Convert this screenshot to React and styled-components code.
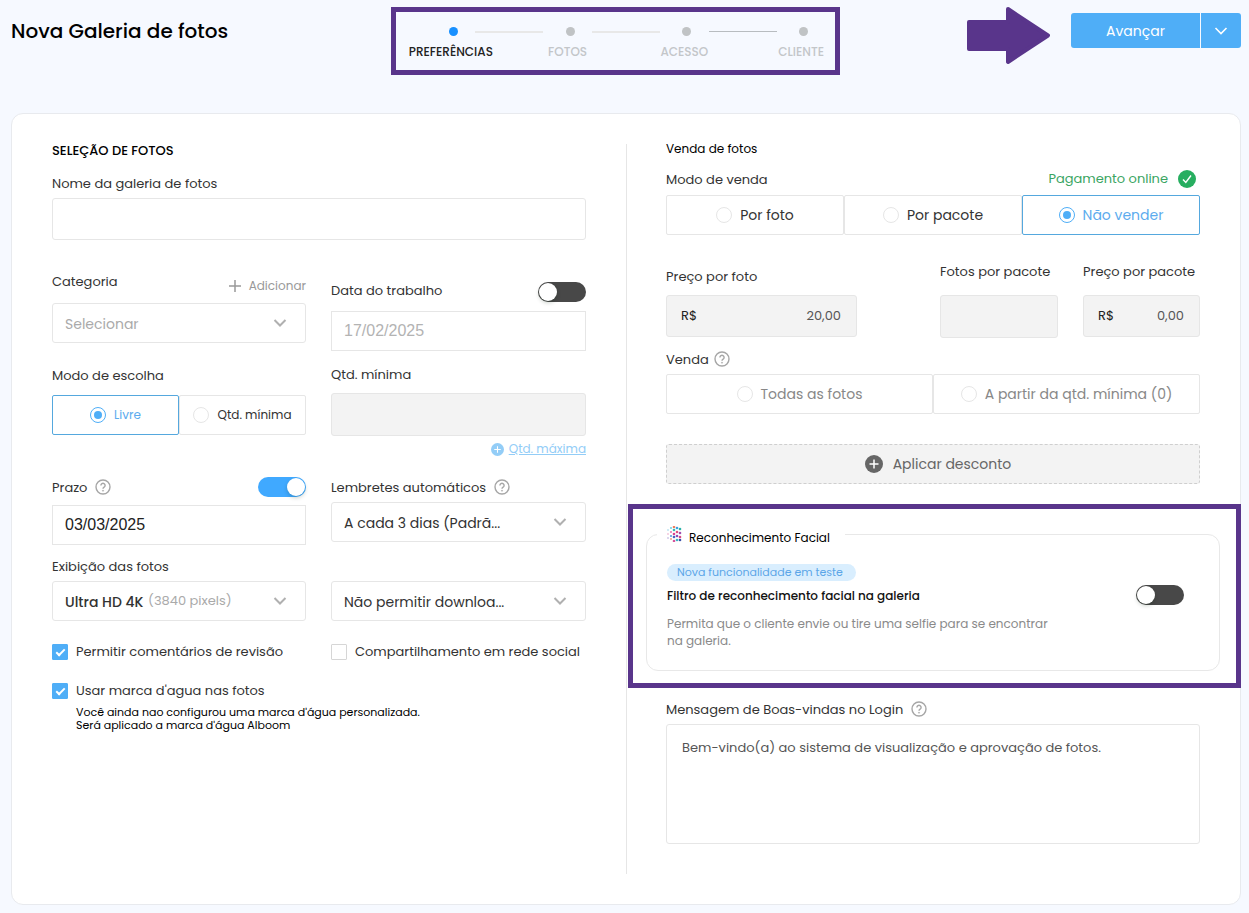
import React from 'react';
import styled, { createGlobalStyle, css } from 'styled-components';

const line = '#e6e6e6';
const blue = '#4faef7';
const purple = '#59358b';

const GlobalStyle = createGlobalStyle`
  *, *::before, *::after { box-sizing: border-box; }
  body {
    margin: 0;
    background: #f6f9ff;
    color: #333;
    font-family: Poppins, Inter, "Open Sans", sans-serif;
    font-size: 13px;
    line-height: 18px;
  }
  button, input, select, textarea { font: inherit; color: inherit; }
  h1, h2, p, ol { margin: 0; padding: 0; }
`;

const Page = styled.div`
  padding: 7px 8px 8px 11px;
`;

const Header = styled.header`
  display: grid;
  grid-template-columns: minmax(0, 19fr) 449px minmax(0, 20fr);
  align-items: start;
  margin-bottom: 38px;
`;

const Title = styled.h1`
  padding-top: 10px;
  color: #000;
  font-size: 20px;
  font-weight: 500;
  line-height: 28px;
`;

const Stepper = styled.nav`
  height: 68px;
  padding-top: 15px;
  border: 5px solid ${purple};
`;

const Steps = styled.ol`
  display: flex;
  list-style: none;
  margin: 0 -24px 0 -4px;
`;

const Step = styled.li`
  flex: 1;
  color: ${(p) => (p.$active ? '#222' : '#c3c6c9')};
  font-size: 12px;
  font-weight: 500;
  line-height: 16px;
  text-align: center;
`;

const Track = styled.div`
  display: flex;
  align-items: center;
  justify-content: space-between;
  height: 9px;
  margin-bottom: 8px;
`;

const HalfLine = styled.span`
  width: 34px;
  height: ${(p) => (p.$thin ? 1 : 2)}px;
  background: ${(p) => (p.$hidden ? 'transparent' : p.$thin ? '#b8bcc0' : '#e8e8e8')};
`;

const Dot = styled.span`
  width: 9px;
  height: 9px;
  margin-left: 5px;
  border-radius: 50%;
  background: ${(p) => (p.$active ? '#1890ff' : '#c0c3c5')};
`;

const Actions = styled.div`
  display: flex;
  justify-content: flex-end;
  gap: 20px;
`;

const SplitButton = styled.div`
  display: flex;
  gap: 1px;
  margin-top: 6px;
`;

const PrimaryButton = styled.button`
  display: grid;
  place-items: center;
  width: ${(p) => (p.$icon ? 40 : 129)}px;
  height: 35px;
  padding: 0;
  border: 0;
  border-radius: ${(p) => (p.$icon ? '0 3px 3px 0' : '3px 0 0 3px')};
  background: ${blue};
  color: #fff;
  font-size: 14px;
`;

const Card = styled.main`
  display: grid;
  grid-template-columns: minmax(0, 1fr) minmax(0, 1fr);
  padding: 30px 40px;
  border: 1px solid #e8eaee;
  border-radius: 12px;
  background: #fff;
`;

const LeftPanel = styled.section`
  padding-right: 40px;
`;

const RightPanel = styled.section`
  padding: 0 0 30px 39px;
  border-left: 1px solid ${line};
`;

const PanelTitle = styled.h2`
  color: #000;
  font-size: ${(p) => (p.$plain ? 12 : 13)}px;
  font-weight: ${(p) => (p.$plain ? 400 : 500)};
  line-height: ${(p) => (p.$plain ? 10 : 14)}px;
`;

const Columns = styled.div`
  display: grid;
  grid-template-columns: minmax(0, 254fr) minmax(0, 255fr);
  column-gap: 25px;
`;

const Field = styled.div`
  display: flex;
  flex-direction: column;
  gap: ${(p) => p.$gap ?? 10}px;
  margin-top: ${(p) => p.$top ?? 24}px;
`;

const LabelRow = styled.div`
  display: flex;
  align-items: ${(p) => (p.$start ? 'flex-start' : 'flex-end')};
  gap: ${(p) => (p.$tight ? 5 : 8)}px;
  min-height: ${(p) => p.$height ?? 18}px;
`;

const LinkButton = styled.button`
  display: flex;
  align-items: center;
  gap: 8px;
  height: 26px;
  margin-left: auto;
  padding: 0;
  border: 0;
  background: none;
  color: #999;
  font-size: 12px;
`;

const box = css`
  width: 100%;
  border: 1px solid ${line};
  border-radius: 3px;
  background: #fff;
  outline: none;
`;

const TextInput = styled.input`
  ${box}
  height: 42px;
  padding: 0 12px;
  &:disabled { height: 43px; background: #f3f3f3; }
`;

const DateInput = styled.input`
  ${box}
  height: 40px;
  padding: 0 12px;
  border-radius: 0;
  color: #222;
  font-family: "Liberation Sans", Arial, sans-serif;
  font-size: 16px;
  &::placeholder { color: #b3b3b3; opacity: 1; }
`;

const SelectBox = styled.div`
  ${box}
  display: flex;
  align-items: center;
  gap: 4px;
  height: 40px;
  padding: 0 18px 0 12px;
  color: #aaa;
  svg { margin-left: auto; flex: none; }
`;

const Select = styled.select`
  appearance: none;
  flex: ${(p) => (p.$fit ? 'none' : '1')};
  min-width: 0;
  height: 38px;
  padding: 2px 0 0;
  border: 0;
  outline: none;
  background: transparent;
  color: ${(p) => (p.$muted ? '#aaa' : '#333')};
  font-size: 14px;
  font-weight: ${(p) => (p.$fit ? 500 : 400)};
`;

const Segments = styled.div`
  display: flex;
`;

const Segment = styled.label`
  flex: 1;
  display: flex;
  align-items: center;
  justify-content: center;
  gap: 8px;
  height: 40px;
  border: 1px solid ${(p) => (p.$active ? '#55a8de' : line)};
  border-radius: 2px;
  color: ${(p) => (p.$active ? '#5cabee' : p.$muted ? '#888' : '#333')};
  font-size: ${(p) => (p.$small ? 12 : 14)}px;
  white-space: nowrap;
`;

const Radio = styled.input`
  appearance: none;
  display: grid;
  place-items: center;
  width: 16px;
  height: 16px;
  margin: 0;
  border: 1px solid #e6e6e6;
  border-radius: 50%;
  &:checked { border-color: ${blue}; }
  &:checked::before {
    content: '';
    width: 8px;
    height: 8px;
    border-radius: 50%;
    background: ${blue};
  }
`;

const Switch = styled.input`
  appearance: none;
  flex: none;
  display: flex;
  align-items: center;
  width: 48px;
  height: 20px;
  margin: 0 0 0 auto;
  padding: 0 1px;
  border-radius: 10px;
  background: #484848;
  &::before {
    content: '';
    width: 18px;
    height: 18px;
    border-radius: 50%;
    background: #fff;
    box-shadow: 0 2px 4px rgba(0, 35, 11, 0.2);
  }
  &:checked { background: #40a9ff; justify-content: flex-end; }
`;

const MaxLink = styled.a`
  display: flex;
  align-items: center;
  align-self: flex-end;
  gap: 5px;
  margin-top: 4px;
  color: #93cdf7;
  font-size: 12px;
  text-decoration: none;
  span { text-decoration: underline; }
`;

const Checks = styled.div`
  display: grid;
  grid-template-columns: minmax(0, 254fr) minmax(0, 255fr);
  column-gap: 25px;
  row-gap: 21px;
  margin-top: 22px;
`;

const CheckLabel = styled.label`
  display: flex;
  align-items: center;
  gap: 8px;
  white-space: nowrap;
`;

const Checkbox = styled.input`
  appearance: none;
  display: grid;
  place-items: center;
  flex: none;
  width: 16px;
  height: 16px;
  margin: 0;
  border: 1px solid #d6d6d6;
  border-radius: 1px;
  background: #fff;
  &:checked { background: ${blue}; border-color: ${blue}; }
  &:checked::before {
    content: '';
    width: 5px;
    height: 9px;
    margin-top: -2px;
    border: solid #fff;
    border-width: 0 2px 2px 0;
    transform: rotate(45deg);
  }
`;

const Note = styled.p`
  margin: 6px 0 0 24px;
  color: #000;
  font-size: 11px;
  line-height: 13px;
`;

const Online = styled.span`
  display: flex;
  align-items: center;
  align-self: center;
  gap: 10px;
  margin: 0 4px 0 auto;
  color: #3aa562;
`;

const Prices = styled.div`
  display: grid;
  grid-template-columns: minmax(0, 191fr) minmax(0, 83fr) minmax(0, 118fr) minmax(0, 25fr) minmax(0, 117fr);
  align-items: start;
  margin-top: 28px;
`;

const PriceField = styled.div`
  grid-column: ${(p) => p.$col};
  display: flex;
  flex-direction: column;
  gap: ${(p) => (p.$low ? 9 : 14)}px;
  padding-top: ${(p) => (p.$low ? 5 : 0)}px;
  white-space: nowrap;
`;

const MoneyBox = styled.div`
  ${box}
  display: flex;
  align-items: center;
  height: 42px;
  padding: 0 15px 0 14px;
  background: #f3f3f3;
  color: #222;
`;

const MoneyInput = styled.input`
  flex: 1;
  min-width: 0;
  padding: 0;
  border: 0;
  background: transparent;
  color: #555;
  text-align: right;
`;

const DiscountButton = styled.button`
  display: flex;
  align-items: center;
  justify-content: center;
  gap: 10px;
  width: 100%;
  height: 40px;
  margin: 30px 0 20px;
  padding: 0 0 0 10px;
  border: 1px dashed #cfcfcf;
  border-radius: 3px;
  background: #f3f3f3;
  color: #666;
  font-size: 14px;
`;

const Highlight = styled.div`
  margin: 0 -41px 0 -38px;
  padding: 13px 16px 12px 13px;
  border: 5px solid ${purple};
`;

const FaceGroup = styled.fieldset`
  margin: 0;
  padding: 17px 35px 21px 20px;
  border: 1px solid #e8e8e8;
  border-radius: 12px;
`;

const Legend = styled.legend`
  display: flex;
  align-items: flex-end;
  gap: 7px;
  height: 24px;
  margin-left: -10px;
  padding: 0 15px 0 10px;
  color: #000;
  font-size: 12px;
  line-height: 16px;
  svg { align-self: center; }
`;

const Badge = styled.span`
  display: inline-block;
  padding: 0 13px 0 10px;
  border-radius: 9px;
  background: #d9eefe;
  color: #5ca6e8;
  font-size: 11px;
  line-height: 17px;
`;

const FaceRow = styled.div`
  display: flex;
  align-items: flex-end;
  min-height: 20px;
  margin-top: 4px;
  color: #111;
  font-size: 12px;
  font-weight: 500;
`;

const Description = styled.p`
  max-width: 384px;
  margin-top: 10px;
  color: #8a8a8a;
  font-size: 12px;
  line-height: 17px;
`;

const Message = styled.textarea`
  ${box}
  display: block;
  height: 120px;
  padding: 14px 15px;
  color: #555;
  resize: none;
`;

const HelpIcon = styled.svg`
  flex: none;
  margin-bottom: 2px;
`;

const Chevron = ({ color = '#b0b0b0', width = 2 }) => (
  <svg width="14" height="14" viewBox="0 0 14 14" fill="none" stroke={color} strokeWidth={width} aria-hidden="true">
    <path d="M1.5 4l5.5 5.5L12.5 4" />
  </svg>
);

const Help = () => (
  <HelpIcon width="16" height="16" viewBox="0 0 16 16" fill="none" stroke="#a6a6a6" strokeWidth="1.4" aria-hidden="true">
    <circle cx="8" cy="8" r="7" />
    <path d="M5.9 6.4a2.1 2.1 0 1 1 3.2 1.8c-.8.5-1.1.8-1.1 1.6" />
    <circle cx="8" cy="11.7" r=".6" fill="#a6a6a6" strokeWidth=".5" />
  </HelpIcon>
);

const PlusDisc = ({ size, color }) => (
  <svg width={size} height={size} viewBox="0 0 18 18" aria-hidden="true">
    <circle cx="9" cy="9" r="9" fill={color} />
    <path d="M9 4.5v9M4.5 9h9" stroke="#fff" strokeWidth="1.5" />
  </svg>
);

const faceDots = [
  [1, 4, '#7ccbe0'], [1, 8, '#e58ab5'], [1, 12, '#a08fd0'],
  [4, 2, '#6cd0df'], [4, 6, '#e86fae'], [4, 10, '#4c8fd8'], [4, 13, '#f0a080'],
  [7, 1, '#ef7f5f'], [7, 4, '#35b8b0'], [7, 8, '#d93f8f'], [7, 11, '#4a64c0'], [7, 15, '#d6549c'],
  [10, 2, '#3aa0e0'], [10, 6, '#e04f80'], [10, 10, '#8a4fb8'], [10, 14, '#39b5c5'],
  [13, 3, '#2bb3a8'], [13, 7, '#9f4fb0'], [13, 11, '#d94a86'], [13, 14, '#3a4fa8'],
];

const FaceIcon = () => (
  <svg width="15" height="16" viewBox="0 0 15 16" aria-hidden="true">
    {faceDots.map(([x, y, c]) => (
      <circle key={`${x}-${y}`} cx={x} cy={y} r={x < 3 ? 0.7 : x < 6 ? 1 : 1.3} fill={c} />
    ))}
  </svg>
);

const steps = ['PREFERÊNCIAS', 'FOTOS', 'ACESSO', 'CLIENTE'];

export default function App() {
  return (
    <>
      <GlobalStyle />
      <Page>
        <Header>
          <Title>Nova Galeria de fotos</Title>
          <Stepper aria-label="Etapas">
            <Steps>
              {steps.map((name, i) => (
                <Step key={name} $active={i === 0}>
                  <Track>
                    <HalfLine $hidden={i === 0} $thin={i === 3} />
                    <Dot $active={i === 0} />
                    <HalfLine $hidden={i === 3} $thin={i === 2} />
                  </Track>
                  {name}
                </Step>
              ))}
            </Steps>
          </Stepper>
          <Actions>
            <svg width="84" height="58" viewBox="0 0 84 58" aria-hidden="true">
              <path
                d="M2 15H41V2L81 28.500L41 55V42H2Z"
                fill={purple}
                stroke={purple}
                strokeWidth="4"
                strokeLinejoin="round"
              />
            </svg>
            <SplitButton>
              <PrimaryButton type="button">Avançar</PrimaryButton>
              <PrimaryButton type="button" $icon aria-label="Mais opções">
                <Chevron color="#fff" width={1.6} />
              </PrimaryButton>
            </SplitButton>
          </Actions>
        </Header>

        <Card>
          <LeftPanel>
            <PanelTitle>SELEÇÃO DE FOTOS</PanelTitle>
            <Field $top={17} $gap={5}>
              <label htmlFor="name">Nome da galeria de fotos</label>
              <TextInput id="name" />
            </Field>

            <Columns>
              <div>
                <Field $top={33} $gap={4}>
                  <LabelRow $start $height={26}>
                    <label htmlFor="category">Categoria</label>
                    <LinkButton type="button">
                      <svg width="12" height="12" viewBox="0 0 12 12" stroke="#999" strokeWidth="1.5" aria-hidden="true">
                        <path d="M6 0v12M0 6h12" />
                      </svg>
                      Adicionar
                    </LinkButton>
                  </LabelRow>
                  <SelectBox>
                    <Select id="category" $muted><option>Selecionar</option></Select>
                    <Chevron />
                  </SelectBox>
                </Field>
                <Field>
                  <span id="mode">Modo de escolha</span>
                  <Segments role="radiogroup" aria-labelledby="mode">
                    <Segment $active $small><Radio type="radio" name="mode" defaultChecked />Livre</Segment>
                    <Segment $small><Radio type="radio" name="mode" />Qtd. mínima</Segment>
                  </Segments>
                </Field>
                <Field $top={42} $gap={8}>
                  <LabelRow $height={20}>
                    <label htmlFor="deadline">Prazo</label>
                    <Help />
                    <Switch type="checkbox" defaultChecked aria-label="Prazo" />
                  </LabelRow>
                  <DateInput id="deadline" defaultValue="03/03/2025" />
                </Field>
                <Field $top={13} $gap={5}>
                  <label htmlFor="display">Exibição das fotos</label>
                  <SelectBox>
                    <Select id="display" $fit><option>Ultra HD 4K</option></Select>
                    <span>(3840 pixels)</span>
                    <Chevron />
                  </SelectBox>
                </Field>
              </div>
              <div>
                <Field $top={42} $gap={9}>
                  <LabelRow $start $height={20}>
                    <label htmlFor="date">Data do trabalho</label>
                    <Switch type="checkbox" aria-label="Data do trabalho" />
                  </LabelRow>
                  <DateInput id="date" placeholder="17/02/2025" />
                </Field>
                <Field $top={15} $gap={9}>
                  <label htmlFor="min">Qtd. mínima</label>
                  <TextInput id="min" disabled />
                </Field>
                <Field $top={0} $gap={0}>
                  <MaxLink href="#max">
                    <PlusDisc size={13} color="#93cdf7" />
                    <span>Qtd. máxima</span>
                  </MaxLink>
                </Field>
                <Field $top={21} $gap={5}>
                  <LabelRow>
                    <label htmlFor="reminders">Lembretes automáticos</label>
                    <Help />
                  </LabelRow>
                  <SelectBox>
                    <Select id="reminders"><option>A cada 3 dias (Padrã...</option></Select>
                    <Chevron />
                  </SelectBox>
                </Field>
                <Field $top={39}>
                  <SelectBox>
                    <Select aria-label="Download"><option>Não permitir downloa...</option></Select>
                    <Chevron />
                  </SelectBox>
                </Field>
              </div>
            </Columns>

            <Checks>
              <CheckLabel><Checkbox type="checkbox" defaultChecked />Permitir comentários de revisão</CheckLabel>
              <CheckLabel><Checkbox type="checkbox" />Compartilhamento em rede social</CheckLabel>
              <CheckLabel><Checkbox type="checkbox" defaultChecked />Usar marca d'agua nas fotos</CheckLabel>
            </Checks>
            <Note>
              Você ainda nao configurou uma marca d'água personalizada.
              <br />
              Será aplicado a marca d'água Alboom
            </Note>
          </LeftPanel>

          <RightPanel>
            <PanelTitle $plain>Venda de fotos</PanelTitle>
            <Field $top={15} $gap={6}>
              <LabelRow $height={20}>
                <span id="sale">Modo de venda</span>
                <Online>
                  Pagamento online
                  <svg width="18" height="18" viewBox="0 0 18 18" aria-hidden="true">
                    <circle cx="9" cy="9" r="9" fill="#27ae60" />
                    <path d="M5 9.500l2.800 3L13 5.500" fill="none" stroke="#fff" strokeWidth="1.4" />
                  </svg>
                </Online>
              </LabelRow>
              <Segments role="radiogroup" aria-labelledby="sale">
                <Segment><Radio type="radio" name="sale" />Por foto</Segment>
                <Segment><Radio type="radio" name="sale" />Por pacote</Segment>
                <Segment $active><Radio type="radio" name="sale" defaultChecked />Não vender</Segment>
              </Segments>
            </Field>

            <Prices>
              <PriceField $col={1} $low>
                <label htmlFor="price">Preço por foto</label>
                <MoneyBox>R$<MoneyInput id="price" defaultValue="20,00" /></MoneyBox>
              </PriceField>
              <PriceField $col={3}>
                <label htmlFor="count">Fotos por pacote</label>
                <TextInput id="count" disabled />
              </PriceField>
              <PriceField $col={5}>
                <label htmlFor="pack">Preço por pacote</label>
                <MoneyBox>R$<MoneyInput id="pack" defaultValue="0,00" /></MoneyBox>
              </PriceField>
            </Prices>

            <Field $top={13} $gap={5}>
              <LabelRow $tight>
                <span id="scope">Venda</span>
                <Help />
              </LabelRow>
              <Segments role="radiogroup" aria-labelledby="scope">
                <Segment $muted><Radio type="radio" name="scope" />Todas as fotos</Segment>
                <Segment $muted><Radio type="radio" name="scope" />A partir da qtd. mínima (0)</Segment>
              </Segments>
            </Field>

            <DiscountButton type="button">
              <PlusDisc size={18} color="#666" />
              Aplicar desconto
            </DiscountButton>

            <Highlight>
              <FaceGroup>
                <Legend><FaceIcon />Reconhecimento Facial</Legend>
                <Badge>Nova funcionalidade em teste</Badge>
                <FaceRow>
                  <label htmlFor="face">Filtro de reconhecimento facial na galeria</label>
                  <Switch id="face" type="checkbox" />
                </FaceRow>
                <Description>
                  Permita que o cliente envie ou tire uma selfie para se encontrar na galeria.
                </Description>
              </FaceGroup>
            </Highlight>

            <Field $top={13} $gap={5}>
              <LabelRow>
                <label htmlFor="message">Mensagem de Boas-vindas no Login</label>
                <Help />
              </LabelRow>
              <Message id="message" defaultValue="Bem-vindo(a) ao sistema de visualização e aprovação de fotos." />
            </Field>
          </RightPanel>
        </Card>
      </Page>
    </>
  );
}
